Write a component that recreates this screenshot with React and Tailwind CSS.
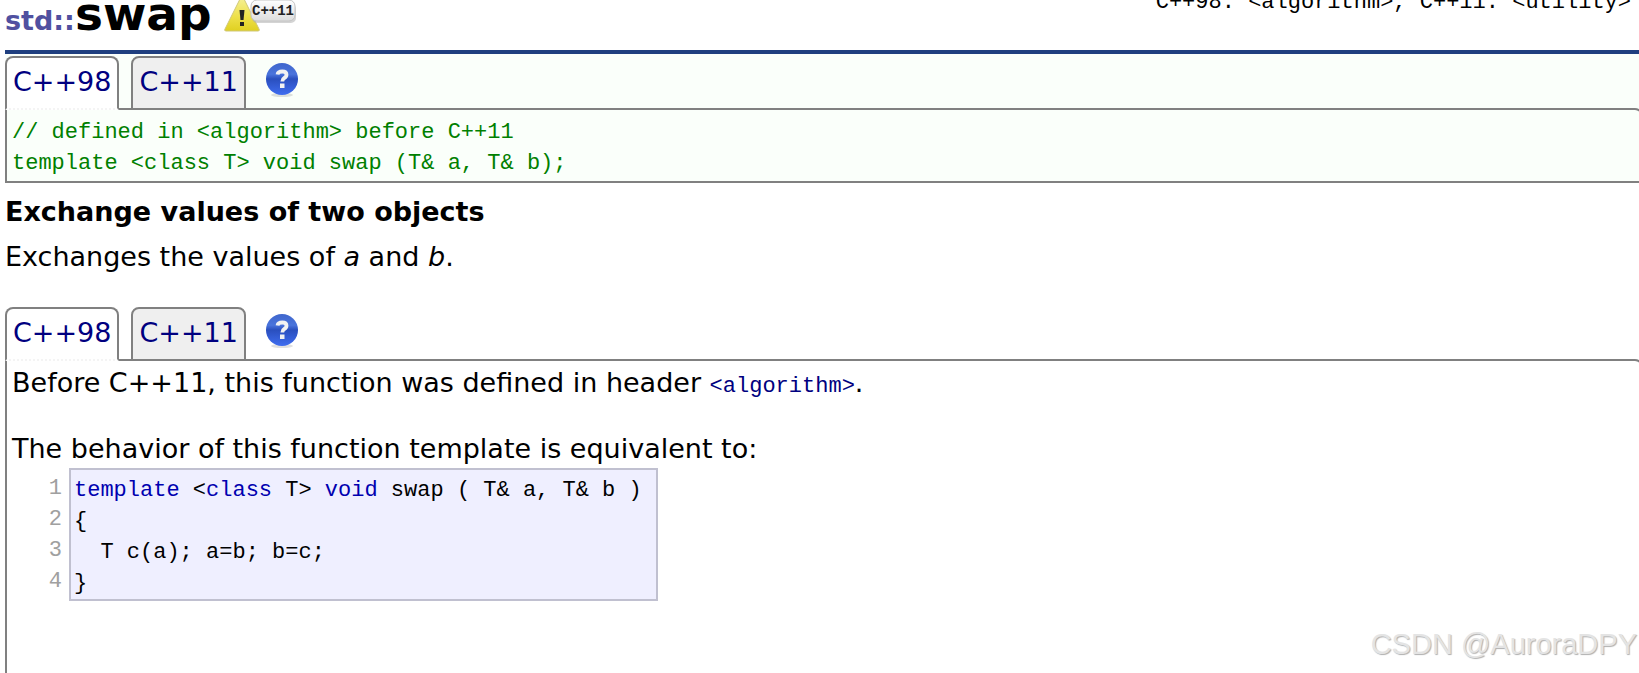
const MONO = "font-['Liberation_Mono','Noto_Sans_CJK_SC',monospace] text-[22px] leading-[31px]";

function WarningIcon() {
  return (
    <svg width="74" height="38" viewBox="0 0 74 38" aria-hidden="true">
      <defs>
        <linearGradient id="warn" x1="0" y1="0" x2="0" y2="1">
          <stop offset="0" stopColor="#f6f3a0" />
          <stop offset="0.6" stopColor="#eee04a" />
          <stop offset="1" stopColor="#e0d020" />
        </linearGradient>
        <linearGradient id="badge" x1="0" y1="0" x2="0" y2="1">
          <stop offset="0" stopColor="#ffffff" />
          <stop offset="1" stopColor="#dddddd" />
        </linearGradient>
      </defs>
      <path d="M18 -1 L35 33 Q36 35 34 35 L2 35 Q0 35 1 33 Z" fill="url(#warn)" stroke="#cfc77a" />
      <path d="M15.500 14h5l-1 10h-3z" fill="#222" />
      <rect x="16" y="26" width="4" height="4" fill="#222" />
      <rect x="28" y="8" width="44" height="19" rx="5" fill="#aaaaaa" opacity="0.5" />
      <rect x="27" y="4" width="44" height="21" rx="6" fill="url(#badge)" stroke="#c4c4c4" />
      <text x="49" y="19" textAnchor="middle" fontSize="14" fontWeight="700" fontFamily="Liberation Mono, monospace" fill="#222">C++11</text>
    </svg>
  );
}

function HelpIcon() {
  return (
    <svg width="34" height="36" viewBox="0 0 34 36" aria-hidden="true">
      <defs>
        <linearGradient id="ball" x1="0" y1="0" x2="0" y2="1">
          <stop offset="0" stopColor="#3f66cc" />
          <stop offset="0.35" stopColor="#4a74dc" />
          <stop offset="0.5" stopColor="#2a4fbe" />
          <stop offset="1" stopColor="#3f6df0" />
        </linearGradient>
      </defs>
      <ellipse cx="17" cy="32" rx="11" ry="2" fill="#999" opacity="0.3" />
      <circle cx="17" cy="16" r="16" fill="url(#ball)" />
      <path d="M12.500 11.500q0.500-3 4.800-3 4.200 0 4.200 3.300 0 2-2.200 3.200-2 1.200-2 3.400" fill="none" stroke="#f2f2f2" strokeWidth="3.800" />
      <rect x="15" y="20.500" width="4.500" height="4.500" fill="#f2f2f2" />
    </svg>
  );
}

function Tab({ active, children }) {
  return (
    <button
      type="button"
      className={`relative h-[54px] rounded-t-lg border-2 border-[#808080] px-1.5 pb-1 text-[27px] text-[#000080] ${
        active ? "z-10 border-b-[#f4f4f4] bg-white [border-bottom-style:dotted]" : "bg-[#efefef]"
      }`}
    >
      {children}
    </button>
  );
}

function Tabs() {
  return (
    <div className="-mb-0.5 flex items-start gap-3">
      <Tab active>C++98</Tab>
      <Tab>C++11</Tab>
      <button type="button" aria-label="Help" className="ml-[7px] mt-[7px]">
        <HelpIcon />
      </button>
    </div>
  );
}

const Kw = ({ children }) => <span className="text-[#0000b0]">{children}</span>;

export default function App() {
  return (
    <div className="relative flex h-screen flex-col overflow-hidden bg-white pl-[5px] font-['DejaVu_Sans',Verdana,sans-serif] text-[27px] leading-[33px] text-black">
      <header className="flex h-[54px] shrink-0 items-start justify-between overflow-hidden border-b-4 border-[#1f3f7f]">
        <div className="-mt-4 flex items-start">
          <h1 className="text-[47px] font-bold leading-[60px]">
            <span className="text-[27px] text-[#5050a0]">std::</span>swap
          </h1>
          <span className="ml-3 mt-3">
            <WarningIcon />
          </span>
        </div>
        <div className={`-mt-[13px] pr-2 ${MONO}`}>C++98: &lt;algorithm&gt;, C++11: &lt;utility&gt;</div>
      </header>

      <section className="shrink-0 bg-[#fafffa] pt-0.5">
        <Tabs />
        <pre className={`-mr-1 rounded-tr-lg border-2 border-[#808080] px-[5px] pb-0.5 pt-[7px] text-[#008000] ${MONO}`}>
          {"// defined in <algorithm> before C++11\ntemplate <class T> void swap (T& a, T& b);"}
        </pre>
      </section>

      <h2 className="mt-3 font-bold">Exchange values of two objects</h2>
      <p className="mt-3">
        Exchanges the values of <i>a</i> and <i>b</i>.
      </p>

      <section className="mt-[34px] flex flex-1 flex-col">
        <Tabs />
        <div className="-mr-1 flex-1 rounded-tr-lg border-2 border-b-0 border-[#808080] px-[5px] pt-[5px]">
          <p>
            Before C++11, this function was defined in header{" "}
            <a href="#algorithm" className={`text-[#000080] ${MONO}`}>&lt;algorithm&gt;</a>.
          </p>
          <p className="mt-[30px]">The behavior of this function template is equivalent to:</p>
          <div className={`mt-[3px] flex items-start ${MONO}`}>
            <pre className={`w-[57px] pr-[7px] pt-[5px] text-right text-[#a0a0a0] ${MONO}`}>{"1\n2\n3\n4"}</pre>
            <pre className={`border-2 border-[#c0c0d0] bg-[#efefff] pl-[3px] pr-3.5 pt-[5px] ${MONO}`}>
              <Kw>template</Kw>{" <"}<Kw>class</Kw>{" T> "}<Kw>void</Kw>{" swap ( T& a, T& b )\n{\n  T c(a); a=b; b=c;\n}"}
            </pre>
          </div>
        </div>
      </section>

      <div className="absolute bottom-3 right-0.5 font-['Liberation_Sans',Arial,sans-serif] text-[29px] text-[#e4e4e4] [text-shadow:1px_1px_1px_#b0b0b0]">
        CSDN @AuroraDPY
      </div>
    </div>
  );
}
